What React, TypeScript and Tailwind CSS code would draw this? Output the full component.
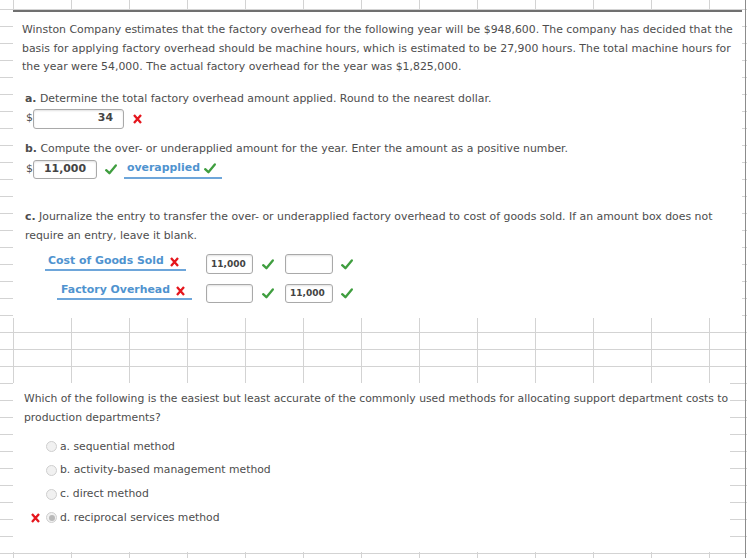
import type { ReactNode } from 'react'

const font = { fontFamily: '"DejaVu Sans", Verdana, sans-serif' }

function Check() {
  return (
    <svg width="12" height="11" viewBox="0 0 12 11" className="shrink-0">
      <path d="M1.2 6.2 L4.4 9.2 L10.8 1.4" stroke="#3f9e3f" strokeWidth="2.3" fill="none" strokeLinecap="round" strokeLinejoin="round" />
    </svg>
  )
}

function Cross() {
  return (
    <svg width="9" height="10" viewBox="0 0 9 10" className="shrink-0">
      <path d="M1 1 L8 9 M8 1 L1 9" stroke="#e5161d" strokeWidth="2.3" fill="none" />
    </svg>
  )
}

function Box({ className, children }: { className: string; children?: ReactNode }) {
  return (
    <div
      className={`flex shrink-0 items-center rounded-[3px] border border-[#a9a9a9] bg-white font-bold text-[#444] shadow-[inset_0_1px_2px_rgba(0,0,0,0.12)] ${className}`}
    >
      {children}
    </div>
  )
}

function Radio({ selected }: { selected?: boolean }) {
  return (
    <span className="flex h-[11px] w-[11px] shrink-0 items-center justify-center rounded-full border border-[#cfcfcf] bg-[#f1f1f1]">
      {selected && <span className="h-[6px] w-[6px] rounded-full bg-[#b9b9b9]" />}
    </span>
  )
}

function Option({ label, wrong, selected }: { label: string; wrong?: boolean; selected?: boolean }) {
  return (
    <div className="flex h-[23.7px] items-center">
      <div className="flex w-[33px] justify-end pr-[6px]">{wrong && <Cross />}</div>
      <Radio selected={selected} />
      <span className="ml-[3px]">{label}</span>
    </div>
  )
}

export default function App() {
  return (
    <div
      className="flex h-[558px] w-[747px] overflow-hidden bg-white bg-[linear-gradient(to_right,#d3d3d3_1px,transparent_1px),linear-gradient(to_bottom,#d3d3d3_1px,transparent_1px)] bg-size-[58px_17px] bg-position-[13px_9px] text-[10.9px] leading-[18.5px] text-[#4d4d4d]"
      style={font}
    >
      <div className="w-[745px] shrink-0">
        {/* first pasted question */}
        <div className="ml-[13px] mt-[10px] h-[308px] w-[729px] border-t-2 border-[#707070] bg-white pt-[9px]">
          <p className="whitespace-nowrap pl-[9px]">
            Winston Company estimates that the factory overhead for the following year will be $948,600. The company has decided that the
            <br />
            basis for applying factory overhead should be machine hours, which is estimated to be 27,900 hours. The total machine hours for
            <br />
            the year were 54,000. The actual factory overhead for the year was $1,825,000.
          </p>

          <p className="mt-[13.5px] whitespace-nowrap pl-[12px]">
            <b>a.</b> Determine the total factory overhead amount applied. Round to the nearest dollar.
          </p>
          <div className="flex h-[20px] items-center pl-[13px]">
            <span className="w-[7px]">$</span>
            <Box className="h-[20px] w-[91px] justify-end pr-[10px]">34</Box>
            <span className="ml-[9px]">
              <Cross />
            </span>
          </div>

          <p className="mt-[11.5px] whitespace-nowrap pl-[12px]">
            <b>b.</b> Compute the over- or underapplied amount for the year. Enter the amount as a positive number.
          </p>
          <div className="mt-px flex h-[19px] items-center pl-[13px]">
            <span className="w-[7px]">$</span>
            <Box className="h-[19px] w-[64px] justify-center">11,000</Box>
            <span className="ml-[8px]">
              <Check />
            </span>
            <span className="ml-[7px] flex h-[19px] w-[98px] items-center gap-[4px] border-b-2 border-[#6ea6da] pl-[3px] font-bold text-[#4f93cf]">
              overapplied
              <Check />
            </span>
          </div>

          <p className="mt-[29.5px] whitespace-nowrap pl-[12px]">
            <b>c.</b> Journalize the entry to transfer the over- or underapplied factory overhead to cost of goods sold. If an amount box does not
            <br />
            require an entry, leave it blank.
          </p>

          <div className="mt-[9px] flex h-[20px] items-start text-[9px]">
            <div className="w-[193px] shrink-0">
              <span className="ml-[32px] flex h-[17px] w-[141px] items-center gap-[6px] border-b-2 border-[#6ea6da] pl-[3px] text-[10.9px] font-bold text-[#4f93cf]">
                Cost of Goods Sold
                <Cross />
              </span>
            </div>
            <Box className="h-[20px] w-[47px] pl-[4px]">11,000</Box>
            <span className="ml-[9px] mt-[5px]">
              <Check />
            </span>
            <Box className="ml-[11px] h-[20px] w-[48px]" />
            <span className="ml-[8px] mt-[5px]">
              <Check />
            </span>
          </div>

          <div className="mt-[10px] flex h-[19px] items-start text-[9px]">
            <div className="w-[193px] shrink-0">
              <span className="ml-[44px] -mt-px flex h-[17px] w-[135px] items-center gap-[6px] border-b-2 border-[#6ea6da] pl-[4px] text-[10.9px] font-bold text-[#4f93cf]">
                Factory Overhead
                <Cross />
              </span>
            </div>
            <Box className="h-[19px] w-[47px]" />
            <span className="ml-[9px] mt-[4px]">
              <Check />
            </span>
            <Box className="ml-[11px] h-[19px] w-[48px] pl-[4px]">11,000</Box>
            <span className="ml-[8px] mt-[4px]">
              <Check />
            </span>
          </div>
        </div>

        {/* second pasted question */}
        <div className="ml-[13px] mt-[65px] h-[169px] w-[717px] bg-white pt-[7px] text-[10.8px]">
          <p className="whitespace-nowrap pl-[11px]">
            Which of the following is the easiest but least accurate of the commonly used methods for allocating support department costs to
            <br />
            production departments?
          </p>
          <div className="mt-[8px]">
            <Option label="a. sequential method" />
            <Option label="b. activity-based management method" />
            <Option label="c. direct method" />
            <Option label="d. reciprocal services method" wrong selected />
          </div>
        </div>
      </div>
      <div className="h-full w-px shrink-0 bg-[#8c8c8c]" />
    </div>
  )
}
